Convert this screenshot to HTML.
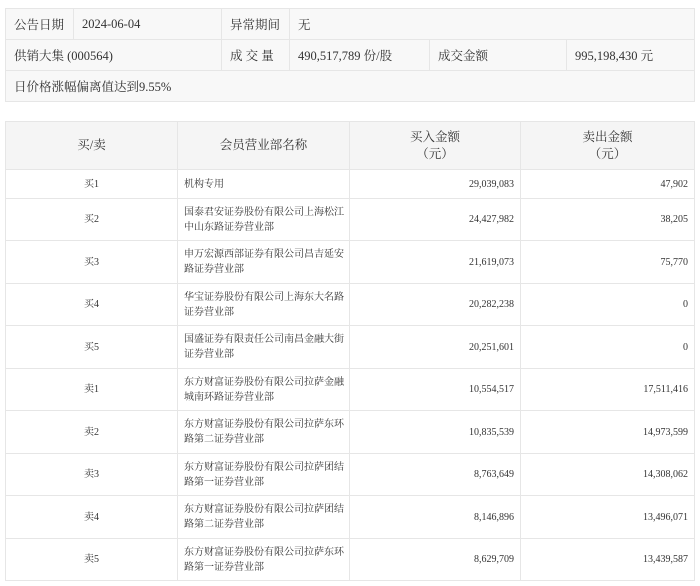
<!DOCTYPE html>
<html><head><meta charset="utf-8"><style>
*{margin:0;padding:0;box-sizing:border-box}
body{width:700px;height:586px;background:#fff;font-family:"Liberation Serif","Noto Serif CJK SC",serif;color:#333;position:relative;overflow:hidden}
table{border-collapse:collapse;position:absolute;left:5px;table-layout:fixed}
td{border:1px solid #e6e6e6}
#t1{top:8px;width:689px;font-size:12.5px;background:#f8f8f8}
#t1 td{height:31px;padding-left:8px}
#t2{top:121px;width:689px;font-size:10px}
#t2 td{padding:0 6px;line-height:15px}
#t2 td.n{padding:0 0 0 6px}
#t2 tr.h td{background:#f5f5f5;height:48px;text-align:center;font-size:12.5px;line-height:17px}
#t2 td.c{text-align:center}
#t2 td.r{text-align:right}
</style></head><body>
<table id="t1">
<colgroup><col style="width:68px"><col style="width:148px"><col style="width:68px"><col style="width:140px"><col style="width:137px"><col style="width:128px"></colgroup>
<tr><td>公告日期</td><td>2024-06-04</td><td>异常期间</td><td colspan="3">无</td></tr>
<tr><td colspan="2">供销大集 (000564)</td><td>成 交 量</td><td>490,517,789 份/股</td><td>成交金额</td><td>995,198,430 元</td></tr>
<tr><td colspan="6">日价格涨幅偏离值达到9.55%</td></tr>
</table>
<table id="t2">
<colgroup><col style="width:172px"><col style="width:172px"><col style="width:171px"><col style="width:174px"></colgroup>
<tr class="h"><td>买/卖</td><td>会员营业部名称</td><td>买入金额<br>（元）</td><td>卖出金额<br>（元）</td></tr>
<tr style="height:29px"><td class="c">买1</td><td class="n">机构专用</td><td class="r">29,039,083</td><td class="r">47,902</td></tr>
<tr style="height:42px"><td class="c">买2</td><td class="n">国泰君安证券股份有限公司上海松江中山东路证券营业部</td><td class="r">24,427,982</td><td class="r">38,205</td></tr>
<tr style="height:43px"><td class="c">买3</td><td class="n">申万宏源西部证券有限公司昌吉延安路证券营业部</td><td class="r">21,619,073</td><td class="r">75,770</td></tr>
<tr style="height:42px"><td class="c">买4</td><td class="n">华宝证券股份有限公司上海东大名路证券营业部</td><td class="r">20,282,238</td><td class="r">0</td></tr>
<tr style="height:43px"><td class="c">买5</td><td class="n">国盛证券有限责任公司南昌金融大街证券营业部</td><td class="r">20,251,601</td><td class="r">0</td></tr>
<tr style="height:42px"><td class="c">卖1</td><td class="n">东方财富证券股份有限公司拉萨金融城南环路证券营业部</td><td class="r">10,554,517</td><td class="r">17,511,416</td></tr>
<tr style="height:43px"><td class="c">卖2</td><td class="n">东方财富证券股份有限公司拉萨东环路第二证券营业部</td><td class="r">10,835,539</td><td class="r">14,973,599</td></tr>
<tr style="height:42px"><td class="c">卖3</td><td class="n">东方财富证券股份有限公司拉萨团结路第一证券营业部</td><td class="r">8,763,649</td><td class="r">14,308,062</td></tr>
<tr style="height:43px"><td class="c">卖4</td><td class="n">东方财富证券股份有限公司拉萨团结路第二证券营业部</td><td class="r">8,146,896</td><td class="r">13,496,071</td></tr>
<tr style="height:42px"><td class="c">卖5</td><td class="n">东方财富证券股份有限公司拉萨东环路第一证券营业部</td><td class="r">8,629,709</td><td class="r">13,439,587</td></tr>
</table>
</body></html>
